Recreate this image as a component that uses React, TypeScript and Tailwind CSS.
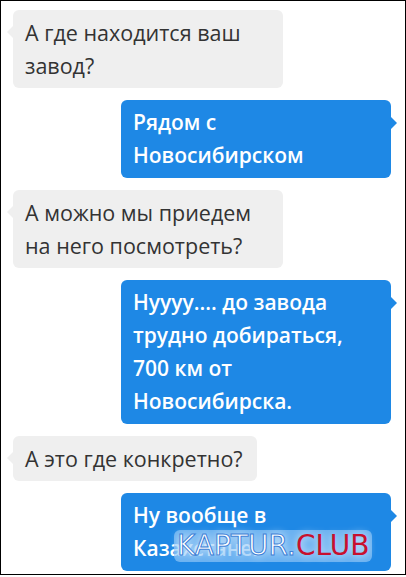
const font = { fontFamily: '"Open Sans", "Noto Sans", sans-serif' };

function InBubble({ lines, w }: { lines: string[]; w: string }) {
  return (
    <div className={`relative ${w} self-start rounded-md bg-[#efefef] px-3 py-[6px] text-[21.5px] leading-[33px] text-[#333]`}>
      <span className="absolute -left-[6px] top-[16px] h-0 w-0 border-y-[6px] border-r-[6px] border-y-transparent border-r-[#efefef]" />
      {lines.map((l, i) => (
        <div key={i} className="whitespace-nowrap">{l}</div>
      ))}
    </div>
  );
}

function OutBubble({ lines, children }: { lines: string[]; children?: React.ReactNode }) {
  return (
    <div className="relative w-[270px] self-end rounded-md bg-[#1e88e5] px-3 py-[6px] text-[21px] font-semibold leading-[33px] text-white">
      <span className="absolute -right-[6px] top-[17px] h-0 w-0 border-y-[6px] border-l-[6px] border-y-transparent border-l-[#1e88e5]" />
      {lines.map((l, i) => (
        <div key={i} className="whitespace-nowrap">{l}</div>
      ))}
      {children}
    </div>
  );
}

export default function App() {
  return (
    <div className="h-[577px] w-[406px] bg-white" style={font}>
      <div className="flex h-[575px] flex-col gap-3 overflow-hidden border border-black pl-3 pr-[14px] pt-[9px]">
        <InBubble w="w-[270px]" lines={['А где находится ваш', 'завод?']} />
        <OutBubble lines={['Рядом с', 'Новосибирском']} />
        <InBubble w="w-[270px]" lines={['А можно мы приедем', 'на него посмотреть?']} />
        <OutBubble lines={['Нуууу.... до завода', 'трудно добираться,', '700 км от', 'Новосибирска.']} />
        <InBubble w="w-[244px]" lines={['А это где конкретно?']} />
        <OutBubble lines={['Ну вообще в', 'Казахстане.']}>
          <div
            className="absolute left-[53px] top-[37px] flex rounded-md bg-[#8cc4f7]/70 px-[3px] text-[28px] font-normal leading-[32px] [text-shadow:0_0_8px_#ffffff]"
            style={{ fontFamily: '"DejaVu Sans", Lato, sans-serif' }}
          >
            <span className="text-white [-webkit-text-stroke:1px_#3d7fd6]">KAPTUR.</span>
            <span className="text-[#c8102e]">CLUB</span>
          </div>
        </OutBubble>
      </div>
    </div>
  );
}
